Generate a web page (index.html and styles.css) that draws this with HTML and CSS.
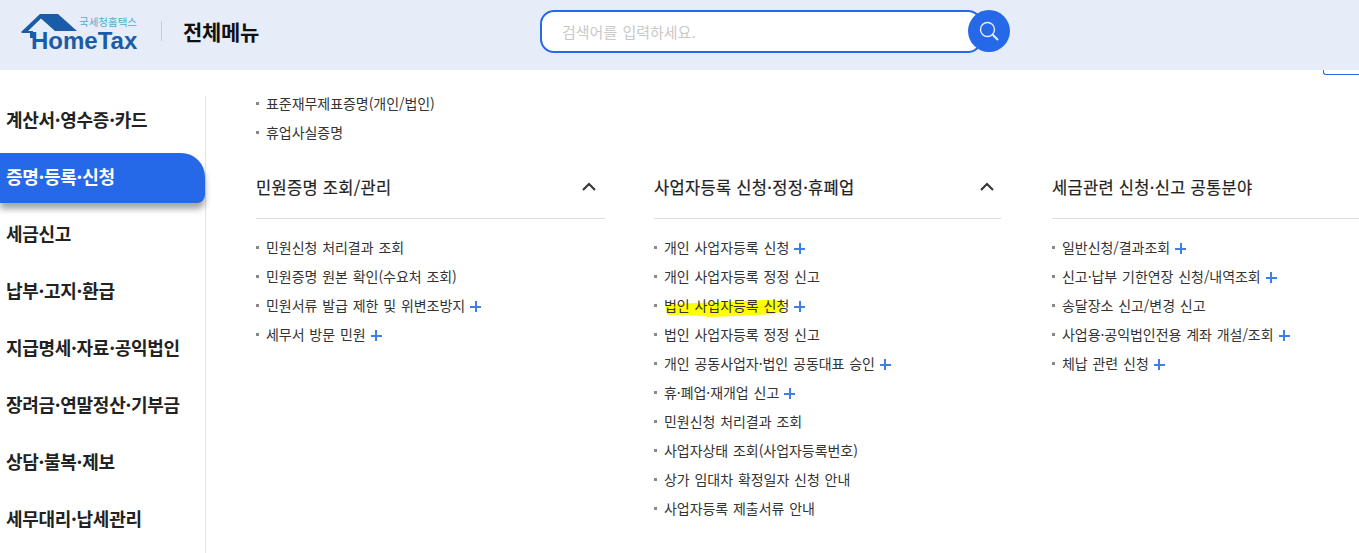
FILE: index.html
```html
<!DOCTYPE html>
<html lang="ko">
<head>
<meta charset="utf-8">
<title>전체메뉴</title>
<link rel="stylesheet" href="styles.css">
</head>
<body>
<header class="top">
  <div class="logo">
    <svg class="roof" width="60" height="30" viewBox="0 0 60 30"><path d="M0 21 L19 3 L37 3 L56 20 L34 20 L20 7.500 L7 20 L12 20 L12 27 L9 27 L9 22 L1 22 Z" fill="#1a5ca8"/></svg>
    <span class="logo-sub">국세청홈택스</span>
    <span class="logo-main">HomeTax</span>
  </div>
  <span class="divider"></span>
  <h1 class="page-title">전체메뉴</h1>
  <div class="search">
    <div class="search-box">검색어를 입력하세요.</div>
    <div class="search-btn">
      <svg width="22" height="22" viewBox="0 0 22 22" fill="none" stroke="#e8eefa" stroke-width="1.4"><circle cx="9.5" cy="9.5" r="7"/><path d="M14.7 14.7 L20 20" stroke-width="2"/></svg>
    </div>
  </div>
</header>
<span class="tab-edge"></span>
<main class="page">
  <nav class="side">
    <a class="side-item">계산서·영수증·카드</a>
    <a class="side-item active">증명·등록·신청</a>
    <a class="side-item">세금신고</a>
    <a class="side-item">납부·고지·환급</a>
    <a class="side-item">지급명세·자료·공익법인</a>
    <a class="side-item">장려금·연말정산·기부금</a>
    <a class="side-item">상담·불복·제보</a>
    <a class="side-item">세무대리·납세관리</a>
  </nav>
  <section class="content">
    <ul class="list intro">
      <li>표준재무제표증명(개인/법인)</li>
      <li>휴업사실증명</li>
    </ul>
    <div class="cols">
      <div class="col">
        <h2 class="col-head">민원증명 조회/관리<svg class="chev" width="14" height="9" viewBox="0 0 14 9" fill="none" stroke="#333" stroke-width="2"><path d="M1 8 L7 2 L13 8"/></svg></h2>
        <ul class="list">
          <li>민원신청 처리결과 조회</li>
          <li>민원증명 원본 확인(수요처 조회)</li>
          <li>민원서류 발급 제한 및 위변조방지<i class="plus"></i></li>
          <li>세무서 방문 민원<i class="plus"></i></li>
        </ul>
      </div>
      <div class="col col-mid">
        <h2 class="col-head">사업자등록 신청·정정·휴폐업<svg class="chev" width="14" height="9" viewBox="0 0 14 9" fill="none" stroke="#333" stroke-width="2"><path d="M1 8 L7 2 L13 8"/></svg></h2>
        <ul class="list">
          <li>개인 사업자등록 신청<i class="plus"></i></li>
          <li>개인 사업자등록 정정 신고</li>
          <li><span class="mark">법인 사업자등록 신청</span><i class="plus"></i></li>
          <li>법인 사업자등록 정정 신고</li>
          <li>개인 공동사업자·법인 공동대표 승인<i class="plus"></i></li>
          <li>휴·폐업·재개업 신고<i class="plus"></i></li>
          <li>민원신청 처리결과 조회</li>
          <li>사업자상태 조회(사업자등록번호)</li>
          <li>상가 임대차 확정일자 신청 안내</li>
          <li>사업자등록 제출서류 안내</li>
        </ul>
      </div>
      <div class="col">
        <h2 class="col-head">세금관련 신청·신고 공통분야</h2>
        <ul class="list">
          <li>일반신청/결과조회<i class="plus"></i></li>
          <li>신고·납부 기한연장 신청/내역조회<i class="plus"></i></li>
          <li>송달장소 신고/변경 신고</li>
          <li>사업용·공익법인전용 계좌 개설/조회<i class="plus"></i></li>
          <li>체납 관련 신청<i class="plus"></i></li>
        </ul>
      </div>
    </div>
  </section>
</main>
</body>
</html>
```
FILE: styles.css
```css
* { box-sizing: border-box; }
html, body { margin: 0; padding: 0; height: 553px; overflow: hidden; background: #fff; }
body { font-family: "Noto Sans CJK KR", "Noto Sans", sans-serif; color: #222; position: relative; }
.top { height: 70px; background: #e7edf8; display: flex; align-items: center; padding: 0 0 8px 21px; }
.logo { position: relative; width: 117px; height: 40px; flex: none; }
.roof { position: absolute; left: 0; top: 0; }
.logo-sub { position: absolute; left: 58px; top: 5px; font-size: 10.5px; line-height: 12px; color: #4cb0cf; white-space: nowrap; }
.logo-main { position: absolute; left: 10px; top: 16px; font-family: "Liberation Sans", sans-serif; font-weight: 700; font-size: 24px; line-height: 28px; color: #1a5ca8; white-space: nowrap; }
.divider { width: 1px; height: 20px; background: #c6ccd6; margin-left: 23px; flex: none; }
.page-title { margin: 0 0 0 21px; font-size: 21px; font-weight: 700; color: #111; line-height: 28px; width: 357px; flex: none; letter-spacing: -.3px; }
.search { display: flex; align-items: center; }
.search-box { width: 442px; height: 43px; border: 2px solid #2569e8; border-radius: 14px; background: #fff; color: #c9c9c9; font-size: 15px; line-height: 39px; padding-left: 20px; word-spacing: 1px; }
.search-btn { width: 42px; height: 42px; border-radius: 50%; background: #2569e8; margin-left: -14px; position: relative; display: flex; align-items: center; justify-content: center; }
.tab-edge { position: absolute; left: 1323px; top: 70px; width: 36px; height: 5px; border-left: 1px solid #2569e8; border-bottom: 1px solid #2569e8; border-bottom-left-radius: 3px; }
.page { display: flex; height: 483px; padding-top: 26px; }
.side { width: 206px; flex: none; border-right: 1px solid #e2e2ee; display: flex; flex-direction: column; gap: 7px; height: 457px; }
.side-item { height: 50px; font-size: 18px; font-weight: 700; line-height: 46px; padding-left: 6px; color: #222; letter-spacing: -.3px; white-space: nowrap; flex: none; }
.side-item.active { background: #2569e8; color: #fff; border-radius: 0 24px 8px 0; box-shadow: 0 6px 6px rgba(0,0,0,.35); }
.content { flex: 1; min-width: 0; padding-left: 50px; }
.list { list-style: none; margin: 0; padding: 0; }
.list li { position: relative; height: 29px; line-height: 28px; font-size: 14px; padding-left: 10px; color: #333; white-space: nowrap; letter-spacing: -.05px; word-spacing: 1px; }
.list li::before { content: ""; position: absolute; left: 0; top: 13px; width: 3px; height: 3px; background: #888; }
.intro { margin-top: -7px; }
.cols { display: flex; gap: 49px; margin-top: 18px; width: 1200px; }
.col { width: 349px; flex: none; }
.col-mid { width: 347px; margin-right: 2px; }
.col-mid .col-head { padding-right: 7px; }
.col-head { display: flex; justify-content: space-between; align-items: center; margin: 0 0 14px; height: 54px; padding: 0 9px 10px 0; border-bottom: 1px solid #dcdce4; font-size: 16.5px; font-weight: 400; line-height: 24px; color: #222; white-space: nowrap; letter-spacing: .3px; -webkit-text-stroke: .2px #222; }
.chev { -webkit-text-stroke: 0; }
.plus { display: inline-block; width: 11px; height: 11px; margin-left: 5px; vertical-align: -1px; background: linear-gradient(#3f7de8,#3f7de8) center/100% 2px no-repeat, linear-gradient(#3f7de8,#3f7de8) center/2px 100% no-repeat; }
.mark { position: relative; isolation: isolate; }
.mark::before { content: ""; position: absolute; z-index: -1; left: 1px; top: 3px; width: 118px; height: 19px; background: #ff0; clip-path: polygon(0 35%, 30% 25%, 60% 20%, 85% 10%, 100% 15%, 100% 70%, 90% 85%, 60% 95%, 40% 100%, 20% 90%, 2% 90%); }
```
